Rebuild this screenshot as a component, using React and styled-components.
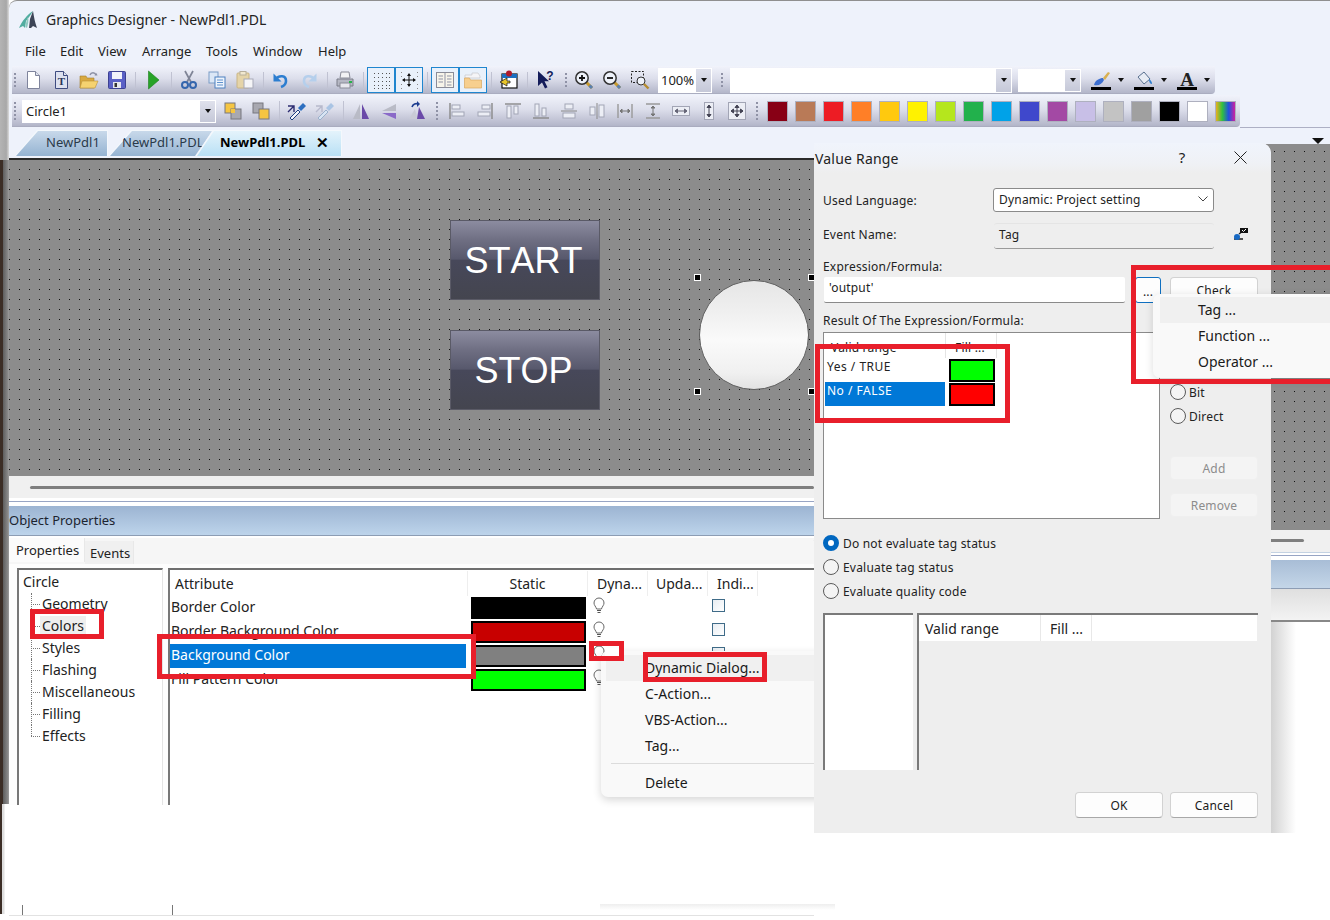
import React from "react";
import styled, { createGlobalStyle, css } from "styled-components";

const Global = createGlobalStyle`
  html, body { margin: 0; padding: 0; background: #fff; }
  * { box-sizing: border-box; }
  body { font-family: "Noto Sans", "Open Sans", sans-serif; color: #111; }
`;

const Root = styled.div`
  position: relative; width: 1330px; height: 920px; overflow: hidden;
  display: flex; background: #fff;
`;
const Edge = styled.div`display: flex; flex-direction: column; width: 9px; flex: none;`;
const EdgeTop = styled.div`height: 160px; background: linear-gradient(90deg, #b4b4b4, #a8a8a8 70%, #dcdcdc);`;
const EdgeMid = styled.div`height: 644px; background: linear-gradient(90deg, #3b2d25 0 3px, #5d5d5d 3px, #8a8a8a 8px, #a0a0a0);`;
const EdgeLow = styled.div`height: 110px; background: linear-gradient(90deg, #3b2d25 0 2px, #dedede 2px 4px, #fff 5px);`;
const Work = styled.div`flex: 1; min-width: 0; display: flex; flex-direction: column;`;

const Chrome = styled.div`height: 127px; background: #eef2fb; border-top: 1px solid #8f8f8f; border-top-left-radius: 8px; padding-left: 3px;`;
const TitleBar = styled.div`height: 37px; display: flex; align-items: center; gap: 8px; padding-left: 7px; font-size: 14px; color: #222;`;
const MenuBar = styled.div`height: 26px; display: flex; align-items: center; padding-left: 13px; font-size: 13px; color: #222;`;
const MenuItem = styled.span`width: ${p => p.$w}px;`;
const ToolRow = styled.div`
  display: flex; align-items: center; width: ${p => p.$w}px; height: ${p => p.$h}px;
  margin-top: ${p => p.$mt}px; background: linear-gradient(180deg, #f1f3fb 0%, #dcdeeb 45%, #b4b7ca 95%, #a5a7ba 100%);
  border-bottom-right-radius: 4px;
`;
const Grip = styled.div`
  width: ${p => p.$w}px; align-self: stretch; flex: none; position: relative;
  &::before { content: ""; position: absolute; left: ${p => p.$l}px; top: 7px; bottom: 7px; border-left: 2px dotted #8f92a6; }
`;
const Spacer = styled.div`width: ${p => p.$w}px; flex: none;`;
const Tool = styled.div`
  width: 28px; height: 26px; flex: none; display: flex; align-items: center; justify-content: center;
  ${p => p.$on && css`background: #e9f1fb; outline: 1.5px solid #1f86cf; outline-offset: -1px;`}
`;
const Sep = styled.div`width: 8px; flex: none; display: flex; justify-content: center; align-self: stretch; padding: 6px 0; &::before { content: ""; width: 1px; background: #c0c2d2; }`;
const Combo = styled.div`
  width: ${p => p.$w}px; height: ${p => p.$h}px; margin-left: ${p => p.$ml || 0}px; flex: none; background: #fff;
  display: flex; align-items: center; justify-content: space-between; padding-left: ${p => p.$pl || 2}px;
  font-size: 13px; color: #222; border: 1px solid #fff;
`;
const ComboBtn = styled.div`
  width: 15px; align-self: stretch; background: linear-gradient(180deg, #dfe1ec, #c5c8d8); display: flex; align-items: center; justify-content: center;
  &::before { content: ""; border: 3.5px solid transparent; border-top: 4px solid #111; border-bottom: 0; }
`;
const ColorTool = styled.div`width: 43px; flex: none; display: flex; align-items: center; margin-left: ${p => p.$ml || 0}px;`;
const ColorIcon = styled.div`width: 26px; display: flex; justify-content: center;`;
const Caret = styled.div`width: 14px; display: flex; justify-content: center; &::before { content: ""; border: 3.5px solid transparent; border-top: 4px solid #111; border-bottom: 0; }`;
const Swatch = styled.div`
  width: 28px; flex: none; display: flex; justify-content: center;
  &::before { content: ""; width: 19px; height: 19px; background: ${p => p.$c}; border: 1.5px solid #e9e6de; outline: 1px solid #aeb0bf; outline-offset: -1px; }
`;

const Body = styled.div`flex: 1; display: flex; min-height: 0;`;
const LeftCol = styled.div`width: 805px; flex: none; display: flex; flex-direction: column;`;
const RightCol = styled.div`flex: 1; display: flex; flex-direction: column; min-width: 0;`;

const TabStrip = styled.div`height: 31px; background: #eef2fb; display: flex; align-items: flex-end; padding: 0 0 2px 6px;`;
const Tab = styled.div`
  position: relative; height: 26px; flex: none; width: ${p => p.$w}px; margin-left: ${p => p.$ml || 0}px; z-index: ${p => p.$active ? 2 : 1};
  font-size: 13px; display: flex; align-items: center; padding: 0 0 2px ${p => p.$pl}px; color: ${p => p.$active ? "#000" : "#2a3a4a"};
  font-weight: ${p => p.$active ? 700 : 400}; background: #f4f8fc;
  clip-path: ${p => p.$clip};
  &::before { content: ""; position: absolute; inset: 1px 1px 0 1px; clip-path: ${p => p.$clip};
    background: ${p => p.$active ? "linear-gradient(180deg, #e4f3fb, #b9e0f5)" : "linear-gradient(180deg, #c8d9ea, #95b3d2)"}; }
  & > * { position: relative; white-space: nowrap; }
`;
const TabClose = styled.span`margin-left: 11px; font-weight: 700; font-size: 15px; line-height: 1;`;

const dots = css`background-color: #8c8c8c; background-image: radial-gradient(circle at 5.5px 5.5px, #111 .45px, transparent .75px); background-size: 10px 10px;`;
const Canvas = styled.div`
  position: relative; height: 318px; border-top: 2px solid #2a2a2a; ${dots}; background-position: 5px 4px;
`;
const HmiButton = styled.div`
  position: absolute; left: ${p => p.$x}px; top: ${p => p.$y}px; width: 150px; height: 80px; border: 1px solid #5a5a66;
  background: linear-gradient(180deg, #8c8ca0 0%, #6e6e82 25%, #57586c 49%, #47485a 50%, #44454f 100%);
  color: #fff; font: 36px "Liberation Sans", Arial, sans-serif; font-kerning: none; display: flex; align-items: center; justify-content: center; padding: 2px 3px 0 0;
`;
const Lamp = styled.div`
  position: absolute; left: 690px; top: 120px; width: 110px; height: 110px; border-radius: 50%; border: 1px solid #5f5f5f;
  background: linear-gradient(180deg, #e6e6e6 0%, #f0f0f0 30%, #fafafa 55%, #f0f0f0 85%, #e2e2e2 100%);
`;
const Handle = styled.i`position: absolute; left: ${p => p.$x}px; top: ${p => p.$y}px; width: 5px; height: 5px; background: #000; outline: 1px solid #fff;`;

const ScrollArea = styled.div`height: 22px; background: #f0f0f0; padding: 10px 0 0 21px; flex: none;`;
const Thumb = styled.div`height: 3px; background: #7f7f7f; width: ${p => p.$w}px; border-radius: 2px;`;
const SplitLines = styled.div`height: 8px; flex: none; background: linear-gradient(180deg, #fff 0 3px, #98a5c4 3px 4px, #fff 4px);`;
const PanelTitle = styled.div`height: 30px; flex: none; background: linear-gradient(180deg, #9cb4d2, #bdd4eb); border-bottom: 1px solid #8d9db4; font-size: 13px; color: #1c2430; display: flex; align-items: center; padding-bottom: 2px;`;
const TabsRow = styled.div`height: 26px; flex: none; margin-top: 2px; background: #f6f6f6; display: flex; align-items: flex-end; font-size: 13px;`;
const PropTab = styled.div`
  height: ${p => p.$on ? 24 : 23}px; width: ${p => p.$w}px; display: flex; align-items: center; padding-left: ${p => p.$on ? 7 : 5}px; color: #222;
  background: ${p => p.$on ? "#fbfbfb" : "#f0f0f0"}; border-right: 1px solid #e8e8e8; align-self: ${p => p.$on ? "flex-start" : "flex-end"};
`;
const Panels = styled.div`height: 241px; flex: none; background: #fdfdfd; display: flex; gap: 5px; padding: 4px 0 0 8px;`;
const TreeBox = styled.div`width: 146px; background: #fff; border-top: 2px solid #6f6f6f; border-left: 2px solid #777; border-right: 1px solid #e4e4e4; font-size: 14px; color: #222; padding: 1px 0 0 4px;`;
const TreeRoot = styled.div`height: 22px; line-height: 22px;`;
const TreeList = styled.div`margin-left: 8px;`;
const TreeNode = styled.div`
  position: relative; height: 22px; line-height: 22px; padding-left: 11px;
  &::before { content: ""; position: absolute; left: 0; top: 0; height: ${p => p.$last ? "50%" : "100%"}; border-left: 1px dotted #777; }
  &::after { content: ""; position: absolute; left: 0; top: 50%; width: 9px; border-top: 1px dotted #777; }
`;
const TreeLabel = styled.span`display: inline-block; height: 20px; line-height: 20px; padding: 0 ${p => p.$on ? 2 : 0}px; margin-left: ${p => p.$on ? -2 : 0}px; background: ${p => p.$on ? "#eee" : "transparent"};`;
const AttrBox = styled.div`flex: 1; min-width: 0; background: #fff; border-top: 2px solid #6f6f6f; border-left: 2px solid #777; font-size: 14px; color: #222;`;
const colTpl = "298px 120px 60px 60px 50px 1fr";
const AttrHead = styled.div`display: grid; grid-template-columns: ${colTpl}; height: 26px; align-items: center;`;
const HeadCell = styled.div`
  height: 25px; line-height: 26px; border-right: ${p => p.$last ? "none" : "1px solid #eee"};
  padding-left: ${p => p.$pl || 0}px; text-align: ${p => p.$center ? "center" : "left"}; white-space: nowrap; overflow: hidden;
`;
const AttrRow = styled.div`display: grid; grid-template-columns: ${colTpl}; height: 24px; align-items: center;`;
const AttrName = styled.div`
  height: 24px; line-height: 21px; padding-left: 1px; white-space: nowrap; width: 296px;
  ${p => p.$sel && css`background: #0078d7; color: #fff;`}
`;
const StaticCell = styled.div`
  width: 115px; height: 22px; margin-left: 3px; background: ${p => p.$c}; border: 2px solid #000;
`;
const BulbCell = styled.div`padding-left: 5px; height: 24px; margin-top: -5px; display: flex; align-items: center;`;
const Check = styled.div`width: 13px; height: 13px; margin-left: 4px; margin-top: -6px; border: 1px solid #3f6b88; background: linear-gradient(135deg, #e8edf2, #fff);`;
const Bottom = styled.div`flex: 1; position: relative; background: #fff;`;
const Ticks = styled.div`
  height: 11px; margin-top: 100px; border-bottom: 1px solid #e2e2e2; display: flex; padding-left: 13px; gap: 149px;
`;
const Tick = styled.div`width: 1px; height: 10px; background: #777;`;

const RightTail = styled.div`height: 17px; flex: none; background: linear-gradient(90deg, #eef2fb 0 426px, #adb0c4 426px) top / 100% 1px no-repeat, #eef2fb; display: flex; justify-content: flex-end; padding: 11px 6px 0 0;
  &::before { content: ""; height: 0; border: 6px solid transparent; border-top: 6px solid #111; border-bottom: 0; }`;
const RightCanvas = styled.div`height: 386px; flex: none; ${dots}; background-position: 5px 2px;`;
const RightScroll = styled.div`height: 22px; flex: none; background: #f0f0f0; padding-top: 9px;`;
const RightLines = styled.div`height: 8px; flex: none; background: linear-gradient(180deg, #c4d2e2 0 1px, #fff 1px 3px, #98a5c4 3px 4px, #fff 4px);`;
const RightBlue = styled.div`height: 29px; flex: none; background: linear-gradient(180deg, #a8bdd6, #c4d6e8); border-bottom: 1px solid #8d9db4;`;
const RightGrey = styled.div`height: 33px; flex: none; background: linear-gradient(180deg, #dfdfdf, #f3f3f3); border-bottom: 2px solid #888;`;
const RightRest = styled.div`flex: none; height: 211px; background: linear-gradient(90deg, #eee 0, #eee 457px, #d2d2d2 457px, #fff 482px);`;

/* dialog */
const Dialog = styled.div`
  position: absolute; left: 814px; top: 143px; width: 457px; height: 690px; background: #eeeeee;
  border-radius: 0 10px 8px 3px; font-size: 12px; letter-spacing: .2px; color: #222; display: flex; flex-direction: column; overflow: hidden;
`;
const DlgTitle = styled.div`height: 30px; flex: none; display: flex; align-items: center; padding-left: 1px; font-size: 14px; color: #222; background: linear-gradient(180deg, #f0f4fc, #eff1f5 70%, #eee);`;
const DlgTitleText = styled.div`flex: 1;`;
const DlgGlyph = styled.div`width: ${p => p.$w}px; display: flex; justify-content: center; font-size: 15px; padding-bottom: 2px;`;
const DlgBody = styled.div`flex: 1; display: flex; flex-direction: column; padding: 0 13px 0 9px;`;
const FormRow = styled.div`display: flex; align-items: center; height: ${p => p.$h}px; margin-top: ${p => p.$mt}px; flex: none;`;
const FieldLabel = styled.div`width: ${p => p.$w || 170}px; flex: none; white-space: nowrap; padding-bottom: ${p => p.$pb || 0}px;`;
const Select = styled.div`width: 221px; height: 24px; background: #fff; border: 1px solid #8a8a8a; border-radius: 3px; display: flex; align-items: center; justify-content: space-between; padding: 0 4px 2px 5px;`;
const ReadOnly = styled.div`width: 220px; height: 26px; margin-left: 1px; padding: 0 0 3px 5px; display: flex; align-items: center; border-top: 1px solid #e4e4e4; border-bottom: 1px solid #9a9a9a; border-radius: 3px; background: #eeeeee;`;
const TinyIcon = styled.div`margin-left: 19px; display: flex; margin-top: -5px;`;
const TextInput = styled.div`width: 302px; height: 26px; margin-left: 1px; background: #fff; border-bottom: 1px solid #8a8a8a; border-radius: 2px; padding: 0 5px 5px; display: flex; align-items: center;`;
const DotsBtn = styled.div`width: 26px; height: 26px; margin-left: 10px; border: 1px solid #0f6fc0; border-radius: 3px; background: #fdfdfd; display: flex; align-items: flex-end; justify-content: center; line-height: 1.4; padding-bottom: 1px;`;
const DlgBtn = styled.div`
  width: 88px; height: ${p => p.$h || 26}px; background: ${p => p.$off ? "#f4f4f4" : "#fdfdfd"}; color: ${p => p.$off ? "#8c8c8c" : "#1a1a1a"};
  border: 1px solid ${p => p.$off ? "#efefef" : "#d2d2d2"}; ${p => !p.$off && "border-bottom-color: #a8a8a8;"} border-radius: 4px; display: flex; align-items: center; justify-content: center;
`;
const CheckSlot = styled.div`margin-left: 9px;`;
const Middle = styled.div`display: flex; height: 187px; flex: none;`;
const RangeList = styled.div`width: 337px; background: #fff; border: 1px solid #8a8a8a; flex: none;`;
const RangeHead = styled.div`display: flex; height: 25px;`;
const RangeHeadCell = styled.div`width: ${p => p.$w}px; border-right: 1px solid #e4e4e4; padding-left: ${p => p.$pl}px; line-height: 30px; white-space: nowrap; overflow: hidden;`;
const RangeRow = styled.div`display: flex; height: 24px; align-items: flex-start;`;
const RangeName = styled.div`
  width: 120px; height: 24px; margin-left: 1px; padding-left: ${p => p.$sel ? 2 : 2}px; line-height: 18px; letter-spacing: .5px;
  ${p => p.$sel && css`background: #0078d7; color: #fff;`}
`;
const RangeFill = styled.div`width: 46px; height: 23px; margin-left: 4px; margin-top: 1px; background: ${p => p.$c}; border: 2px solid #000;`;
const SideCol = styled.div`flex: 1; display: flex; flex-direction: column; padding-left: 10px;`;
const SideRadios = styled.div`margin-top: 48px; display: flex; flex-direction: column;`;
const RadioLine = styled.div`display: flex; align-items: center; height: 24px; gap: ${p => p.$gap}px;`;
const Radio = styled.div`
  width: 16px; height: 16px; border-radius: 50%; flex: none; border: 1px solid #5a5a5a; background: #f4f4f4;
  ${p => p.$on && css`border: 5px solid #0067c0; background: #fff;`}
`;
const SideBtns = styled.div`margin-top: 28px; display: flex; flex-direction: column; gap: 13px;`;
const RadioGroup = styled.div`margin-top: 12px; flex: none;`;
const LowerLists = styled.div`margin-top: 10px; height: 157px; flex: none; display: flex; gap: 4px;`;
const LowerLeft = styled.div`width: 90px; background: #fff; border-top: 2px solid #7a7a7a; border-left: 2px solid #7a7a7a;`;
const LowerRight = styled.div`flex: 1; background: #eee; border-top: 2px solid #7a7a7a; border-left: 2px solid #7a7a7a; font-size: 14px; letter-spacing: 0;`;
const LowerHead = styled.div`height: 26px; background: #fff; display: flex; margin-right: 1px;`;
const LowerCell = styled.div`width: ${p => p.$w}px; padding-left: ${p => p.$pl}px; border-right: 1px solid #e8e8e8; line-height: 27px; white-space: nowrap;`;
const Footer = styled.div`margin-top: 22px; display: flex; justify-content: flex-end; gap: 7px;`;

/* popups */
const ContextMenu = styled.div`
  position: absolute; left: 601px; top: 651px; width: 240px; height: 146px; background: #f9f9f9; border-radius: 7px 0 0 7px;
  box-shadow: 0 3px 8px rgba(0,0,0,.16); font-size: 14px; color: #1a1a1a; padding-top: 4px;
`;
const CtxItem = styled.div`height: 26px; line-height: 25px; padding-left: 39px; margin-left: 5px; ${p => p.$hover && "background: #f0f0f0;"}`;
const CtxSep = styled.div`height: 1px; background: #dcdcdc; margin: 4px 0 6px 10px;`;
const Popup = styled.div`
  position: absolute; left: 1153px; top: 294px; width: 200px; height: 84px; background: #f9f9f9; border-radius: 7px 0 0 7px;
  box-shadow: 0 2px 8px rgba(0,0,0,.14); font-size: 14px; color: #1a1a1a; padding-top: 3px;
`;
const PopItem = styled.div`height: 26px; line-height: 25px; margin-left: 7px; padding-left: 38px; ${p => p.$hover && "background: #f0f0f0;"}`;
const ShadowStripe = styled.div`position: absolute; left: 600px; top: 904px; width: 235px; height: 6px; background: linear-gradient(180deg, #eeeeee, #fff);`;
const RedBox = styled.div`
  position: absolute; left: ${p => p.$x}px; top: ${p => p.$y}px; width: ${p => p.$w}px; height: ${p => p.$h}px;
  border: 5px solid #e81f2b; ${p => p.$open && "border-right: none;"} pointer-events: none;
  ${p => p.$cover && css`&::after { content: ""; position: absolute; left: 11px; top: 2px; width: 14px; height: 8px; background: #fff; }`}
`;

/* icons */
const Ic = ({ children, s = 20, v = "0 0 20 20" }) => <svg width={s} height={s} viewBox={v}>{children}</svg>;
const Logo = () => (
  <svg width="19" height="18" viewBox="0 0 19 18">
    <path d="M0 17 C3 10 8 4 14 0 C12 4 9 7 7 10 L6 17 L4 15 Z" fill="#52ada0" />
    <path d="M14 0 C15 6 16 12 18 17 L14 15 L12 17 L10 17 L11 8 Z" fill="#3c4456" />
    <path d="M9 6 C10 9 9 13 8 17 L6.500 16 C7 12 7.500 9 9 6z" fill="#8fc9c0" />
  </svg>
);
const doc = (stroke, fill) => <><path d="M4.5 1.5h8l4 4v13h-12z" fill={fill} stroke={stroke} /><path d="M12.5 1.5v4h4" fill="#dfe3ee" stroke={stroke} /></>;
const New = () => <Ic>{doc("#7f849c", "#fff")}</Ic>;
const TDoc = () => <Ic>{doc("#3f4c80", "#dde1ef")}<text x="10.5" y="15" fontSize="11" fontWeight="700" fontFamily="Liberation Serif" textAnchor="middle" fill="#2a3358">T</text></Ic>;
const Open = () => <Ic><path d="M1 6h6l1 2h7v10H1z" fill="#d9a93f" stroke="#a5812e" strokeWidth=".6" /><path d="M3 11h16l-3 7H1z" fill="#f5d270" stroke="#b8913a" strokeWidth=".6" /><path d="M11 5c1-3 5-3 6 0" fill="none" stroke="#8b8fa3" strokeWidth="1.4" /><path d="M15.5 5.5h3l-1-2.5z" fill="#8b8fa3" /></Ic>;
const Save = () => <Ic><rect x="1.5" y="1.5" width="17" height="17" rx="1" fill="#5a60c6" stroke="#3d4192" /><rect x="5" y="2" width="10" height="7" fill="#f1f2fb" /><rect x="6" y="12" width="8" height="6" fill="#e6e6ee" /><rect x="7.5" y="13" width="2.5" height="4" fill="#333" /></Ic>;
const Play = () => <Ic><path d="M5.5 1 L16 10 L5.5 19z" fill="#27a327" stroke="#1d7d1d" strokeWidth=".6" /></Ic>;
const Cut = () => <Ic><path d="M6 1l6 11M14 1L8 12" stroke="#7f8496" strokeWidth="1.7" /><circle cx="6" cy="15" r="3" fill="none" stroke="#3566ad" strokeWidth="2" /><circle cx="14" cy="15" r="3" fill="none" stroke="#3566ad" strokeWidth="2" /></Ic>;
const pageLines = <path d="M10 10h6M10 12.5h6M10 15h6" stroke="#3a78c0" strokeWidth=".8" />;
const Copy = () => <Ic><rect x="2" y="2" width="9" height="11" fill="#dbe7f6" stroke="#7a9cc6" /><rect x="8" y="7" width="10" height="11" fill="#eef4fc" stroke="#4c80c0" />{pageLines}</Ic>;
const Paste = () => <Ic><rect x="2" y="3" width="12" height="15" rx="1" fill="#e5d4a8" stroke="#c9b484" /><rect x="5" y="1.5" width="6" height="3.5" fill="#f1e8cf" stroke="#b8b09c" /><rect x="9" y="9" width="9" height="9" fill="#f5f5f7" stroke="#a7a9b8" /></Ic>;
const Undo = ({ c = "#2d7ed0", flip }) => <Ic><g transform={flip ? "translate(20 0) scale(-1 1)" : undefined}><path d="M5 9c3-4 10-4 10 2 0 3-2 5-5 6" fill="none" stroke={c} strokeWidth="2.6" /><path d="M2.5 3.5v8h8z" fill={c} /></g></Ic>;
const Print = () => <Ic><path d="M6 2h8l1 6H5z" fill="#f2f2f4" stroke="#8a8c98" /><path d="M2 9h16v7H2z" fill="#b6b8c4" stroke="#7a7c88" /><rect x="5" y="13" width="10" height="5" fill="#e8e8ee" stroke="#8a8c98" /><rect x="14" y="11" width="3" height="2" fill="#27b14a" /></Ic>;
const Grid = () => <Ic>{[3, 7, 11, 15, 18].flatMap(x => [3, 7, 11, 15, 18].map(y => <rect key={x + "-" + y} x={x} y={y} width="1" height="1" fill="#555" />))}</Ic>;
const Snap = () => <Ic>{[2, 18].flatMap(x => [2, 6, 14, 18].map(y => <rect key={x + "-" + y} x={x} y={y} width="1" height="1" fill="#8a8a8a" />))}<path d="M10 4v12M4 10h12" stroke="#111" strokeWidth="1" /><path d="M10 3l-2 3h4zM10 17l-2-3h4zM3 10l3-2v4zM17 10l-3-2v4z" fill="#111" /></Ic>;
const Book = () => <Ic><rect x="1.5" y="2.5" width="17" height="15" fill="#f8f5ea" stroke="#8a8c98" /><path d="M10 3v14M3.5 6h4.5M3.5 9h4.5M3.5 12h4.5M12 6h4.5M12 9h4.5M12 12h4.5M12 15h4.5" stroke="#8f93a6" /></Ic>;
const PaleFolder = () => <Ic><path d="M2 5h7v-2h6l2 3v2H2z" fill="#f5f5f7" stroke="#c7c7cc" strokeWidth=".7" /><path d="M1.5 8h5l1 2h11v8h-17z" fill="#f7cf8e" stroke="#d8a860" strokeWidth=".7" /></Ic>;
const WinObj = () => <Ic><rect x="3" y="4" width="15" height="14" fill="#fff" stroke="#111" strokeWidth="1.2" /><rect x="3" y="4" width="15" height="4" fill="#1c6fc0" /><circle cx="10" cy="3.5" r="3" fill="#b01a2a" /><path d="M1 12l7-4v3h3v2H8v3z" fill="#e8c52a" stroke="#111" strokeWidth=".7" /></Ic>;
const HelpCur = () => <Ic><path d="M3 1v15l4-3.5 3 6 2.5-1.2-3-6H14z" fill="#141c5a" /><text x="15" y="10" fontSize="12" fontWeight="700" fontFamily="Liberation Sans" textAnchor="middle" fill="#141c5a">?</text></Ic>;
const lens = <><path d="M12 12l6 6" stroke="#c79a2e" strokeWidth="3" /><path d="M15.5 15.5l2.5 2.5" stroke="#5a80b0" strokeWidth="3" /><circle cx="8" cy="8" r="6.2" fill="#eef2fa" stroke="#333" strokeWidth="1.5" /></>;
const ZoomIn = () => <Ic>{lens}<path d="M5 8h6M8 5v6" stroke="#111" strokeWidth="1.8" /></Ic>;
const ZoomOut = () => <Ic>{lens}<path d="M5 8h6" stroke="#111" strokeWidth="1.8" /></Ic>;
const ZoomRect = () => <Ic><rect x="1.5" y="1.5" width="12" height="11" fill="none" stroke="#222" strokeDasharray="2 1.5" /><circle cx="11" cy="11" r="4" fill="#eef2fa" stroke="#333" /><path d="M14 14l4.5 4.5" stroke="#b58c30" strokeWidth="2.4" /></Ic>;
const Brush = () => <Ic><path d="M3 15c1-5 6-7 9-7l1 2c-2 4-5 6-10 5z" fill="#3d6fd0" /><path d="M12 8l5-6 2 1-5 7z" fill="#d9b050" /><rect x="0" y="17" width="20" height="3" fill="#000" /></Ic>;
const Fill = () => <Ic><path d="M4 7l6-5 6 7-6 5z" fill="#e8ecf4" stroke="#58708f" /><path d="M15 9c2 1 3 3 3 5-2 0-3-2-3-5z" fill="#2d7ed0" /><rect x="0" y="17" width="20" height="3" fill="#000" /></Ic>;
const FontA = () => <Ic><text x="10" y="15.5" fontSize="19" fontWeight="700" fontFamily="Liberation Serif" textAnchor="middle" fill="#222">A</text><rect x="0" y="17" width="20" height="3" fill="#000" /></Ic>;
const Layer = ({ front }) => <Ic><rect x="2" y="2" width="10" height="10" fill={front ? "#a8a8b0" : "#f5c542"} stroke="#77777f" /><rect x="8" y="8" width="10" height="10" fill={front ? "#f5c542" : "#a8a8b0"} stroke="#77777f" />{front ? null : <rect x="8" y="8" width="4" height="4" fill="#f5c542" />}</Ic>;
const Dropper = ({ pale }) => <Ic><path d="M3 17l8-8 2 2-8 8z" fill={pale ? "#d8e4f2" : "#f4f4f8"} stroke={pale ? "#9ab0cc" : "#1d3d80"} /><path d="M11 7l5-5 3 3-5 5z" fill={pale ? "#a9c4e4" : "#2d6fc0"} /><path d="M1 11l6-6M1 5h6v6" fill="none" stroke={pale ? "#b7b9cc" : "#2b2b70"} strokeWidth="1.4" /></Ic>;
const FlipH = () => <Ic><path d="M9 3v15H2z" fill="#b9bbc6" /><path d="M11 3v15h7z" fill="#6a4aa8" /></Ic>;
const FlipV = () => <Ic><path d="M17 3v7H3z" fill="#b9bbc6" /><path d="M17 18v-6H3z" fill="#8a6ac8" /></Ic>;
const Rotate = () => <Ic><path d="M12 6l6 12h-8z" fill="#6a4aa8" /><path d="M8 8l2 10H2z" fill="#c9cbd6" /><path d="M5 6c1-3 4-4 6-3" fill="none" stroke="#1d3d90" strokeWidth="1.6" /><path d="M10 0l3 3-3 3z" fill="#1d3d90" /></Ic>;
const al = { stroke: "#a2a5b5", fill: "#eceef5", strokeWidth: 1 };
const Align = ({ k }) => {
  const s = {
    l: <><path d="M3 2v16" stroke="#888" strokeWidth="1.4" /><rect x="5" y="4" width="8" height="4" {...al} /><rect x="5" y="11" width="12" height="4" {...al} /></>,
    r: <><path d="M17 2v16" stroke="#888" strokeWidth="1.4" /><rect x="7" y="4" width="8" height="4" {...al} /><rect x="3" y="11" width="12" height="4" {...al} /></>,
    t: <><path d="M2 3h16" stroke="#888" strokeWidth="1.4" /><rect x="4" y="5" width="4" height="12" {...al} /><rect x="11" y="5" width="4" height="8" {...al} /></>,
    b: <><path d="M2 17h16" stroke="#888" strokeWidth="1.4" /><rect x="4" y="3" width="4" height="12" {...al} /><rect x="11" y="7" width="4" height="8" {...al} /></>,
    cv: <><path d="M2 10h16" stroke="#888" /><rect x="6" y="3" width="8" height="5" {...al} /><rect x="4" y="12" width="12" height="5" {...al} /></>,
    ch: <><path d="M10 2v16" stroke="#888" /><rect x="3" y="6" width="5" height="8" {...al} /><rect x="12" y="4" width="5" height="12" {...al} /></>,
    dh: <><path d="M3 3v14M17 3v14" stroke="#999" strokeWidth="1.4" /><path d="M5 10h10M5 10l2-2v4zM15 10l-2-2v4z" stroke="#777" fill="#777" /></>,
    dv: <><path d="M3 3h14M3 17h14" stroke="#999" strokeWidth="1.4" /><path d="M10 5v10M10 5l-2 2h4zM10 15l-2-2h4z" stroke="#777" fill="#777" /></>,
    sh: <><rect x="1.5" y="5.5" width="17" height="9" {...al} /><path d="M4 10h12M4 10l2.5-2v4zM16 10l-2.5-2v4z" stroke="#667" fill="#667" /></>,
    sv: <><rect x="5.5" y="1.5" width="9" height="17" {...al} /><path d="M10 4v12M10 4l-2 2.5h4zM10 16l-2-2.5h4z" stroke="#445" fill="#445" /></>,
    sb: <><rect x="1.5" y="1.5" width="17" height="17" {...al} /><path d="M4 10h12M10 4v12M4 10l2.5-2v4zM16 10l-2.5-2v4zM10 4l-2 2.5h4zM10 16l-2-2.5h4z" stroke="#445" fill="#445" /></>,
  };
  return <Ic>{s[k]}</Ic>;
};
const Bulb = () => <svg width="12" height="17" viewBox="0 0 12 17"><path d="M6 1a5 5 0 0 0-5 5c0 2.2 1.8 3.4 2.6 6h4.8c.8-2.6 2.6-3.8 2.6-6a5 5 0 0 0-5-5z" fill="#fff" stroke="#666" /><path d="M4 13.5h4M4.5 15.5h3" stroke="#555" /></svg>;
const Chevron = () => <svg width="12" height="8" viewBox="0 0 12 8"><path d="M1.5 1.5L6 6l4.5-4.5" fill="none" stroke="#444" /></svg>;
const CloseX = () => <svg width="13" height="13" viewBox="0 0 13 13"><path d="M.5.5l12 12M12.5.5l-12 12" stroke="#222" /></svg>;
const NetIcon = () => <svg width="15" height="14" viewBox="0 0 15 14"><path d="M6 7L13 1.5M1 12h9" stroke="#222" strokeWidth="1.5" /><rect x="7" y="1" width="8" height="5" fill="#111" /><path d="M9 3l1.5 1.5L13 2" stroke="#fff" fill="none" /><circle cx="4" cy="10" r="3" fill="#1769c4" /></svg>;

const swatches = ["#880015", "#b97a57", "#ed1c24", "#ff7f27", "#ffc90e", "#fff200", "#b5e61d", "#22b14c", "#00a2e8", "#3f48cc", "#a349a4", "#c8bfe7", "#c3c3c3", "#a0a0a0", "#000", "#fff", "linear-gradient(90deg, #e8b020, #30c040, #2050e0, #d020a0)"];
const tree = ["Geometry", "Colors", "Styles", "Flashing", "Miscellaneous", "Filling", "Effects"];
const attrs = [["Border Color", "#000"], ["Border Background Color", "#c80000"], ["Background Color", "#808080"], ["Fill Pattern Color", "#00ff00"]];
const menus = [["File", 35], ["Edit", 38], ["View", 44], ["Arrange", 64], ["Tools", 47], ["Window", 65], ["Help", 40]];
const clipL = "polygon(22px 0, 100% 0, 100% 100%, 0 100%)";
const clipB = "polygon(22px 0, 100% 0, 86px 100%, 0 100%)";
const clipA = "polygon(17px 0, 100% 0, 100% 100%, 0 100%)";

export default function App() {
  return (
    <Root>
      <Global />
      <Edge><EdgeTop /><EdgeMid /><EdgeLow /></Edge>
      <Work>
        <Chrome>
          <TitleBar><Logo /><span>Graphics Designer - NewPdl1.PDL</span></TitleBar>
          <MenuBar>{menus.map(([m, w]) => <MenuItem key={m} $w={w}>{m}</MenuItem>)}</MenuBar>
          <ToolRow $w={1203} $h={28} $mt={2}>
            <Grip $w={7} $l={2} />
            <Tool><New /></Tool><Tool><TDoc /></Tool><Tool><Open /></Tool><Tool><Save /></Tool><Sep />
            <Tool><Play /></Tool><Sep />
            <Tool><Cut /></Tool><Tool><Copy /></Tool><Tool><Paste /></Tool><Sep />
            <Tool><Undo /></Tool><Tool><Undo c="#b5cfec" flip /></Tool><Sep />
            <Tool><Print /></Tool><Sep />
            <Tool $on><Grid /></Tool><Tool $on><Snap /></Tool><Sep />
            <Tool $on><Book /></Tool><Tool $on><PaleFolder /></Tool><Sep />
            <Tool><WinObj /></Tool><Sep />
            <Tool><HelpCur /></Tool><Grip $w={11} $l={6} />
            <Tool><ZoomIn /></Tool><Tool><ZoomOut /></Tool><Tool><ZoomRect /></Tool>
            <Combo $w={54} $h={25} $ml={4}>100%<ComboBtn /></Combo>
            <Grip $w={18} $l={9} />
            <Combo $w={282} $h={25}><span /><ComboBtn /></Combo>
            <Combo $w={63} $h={23} $ml={6}><span /><ComboBtn /></Combo>
            <ColorTool $ml={7}><ColorIcon><Brush /></ColorIcon><Caret /></ColorTool>
            <ColorTool><ColorIcon><Fill /></ColorIcon><Caret /></ColorTool>
            <ColorTool><ColorIcon><FontA /></ColorIcon><Caret /></ColorTool>
          </ToolRow>
          <ToolRow $w={1228} $h={32} $mt={1}>
            <Grip $w={10} $l={2} />
            <Combo $w={194} $h={23} $pl={3}>Circle1<ComboBtn /></Combo>
            <Spacer $w={3} />
            <Tool><Layer /></Tool><Tool><Layer front /></Tool><Sep />
            <Tool><Dropper /></Tool><Tool><Dropper pale /></Tool><Sep />
            <Tool><FlipH /></Tool><Tool><FlipV /></Tool><Tool><Rotate /></Tool>
            <Grip $w={12} $l={5} />
            {["l", "r", "t", "b", "cv", "ch", "dh", "dv", "sh", "sv", "sb"].map(k => <Tool key={k}><Align k={k} /></Tool>)}
            <Grip $w={12} $l={5} />
            {swatches.map(c => <Swatch key={c} $c={c} />)}
          </ToolRow>
        </Chrome>
        <Body>
          <LeftCol>
            <TabStrip>
              <Tab $w={93} $pl={31} $clip={clipL}><span>NewPdl1</span></Tab>
              <Tab $w={104} $ml={1} $pl={13} $clip={clipB}><span>NewPdl1.PDL</span></Tab>
              <Tab $w={146} $ml={-17} $pl={24} $active $clip={clipA}><span>NewPdl1.PDL</span><TabClose>✕</TabClose></Tab>
            </TabStrip>
            <Canvas>
              <HmiButton $x={441} $y={60}>START</HmiButton>
              <HmiButton $x={441} $y={170}>STOP</HmiButton>
              <Lamp />
              <Handle $x={686} $y={115} /><Handle $x={800} $y={115} />
              <Handle $x={686} $y={229} /><Handle $x={800} $y={229} />
            </Canvas>
            <ScrollArea><Thumb $w={784} /></ScrollArea>
            <SplitLines />
            <PanelTitle>Object Properties</PanelTitle>
            <TabsRow>
              <PropTab $on $w={76}>Properties</PropTab>
              <PropTab $w={49}>Events</PropTab>
            </TabsRow>
            <Panels>
              <TreeBox>
                <TreeRoot>Circle</TreeRoot>
                <TreeList>
                  {tree.map((t, i) => (
                    <TreeNode key={t} $last={i === tree.length - 1}><TreeLabel $on={t === "Colors"}>{t}</TreeLabel></TreeNode>
                  ))}
                </TreeList>
              </TreeBox>
              <AttrBox>
                <AttrHead>
                  <HeadCell $pl={5}>Attribute</HeadCell>
                  <HeadCell $center>Static</HeadCell>
                  <HeadCell $pl={9}>Dyna...</HeadCell>
                  <HeadCell $pl={8}>Upda...</HeadCell>
                  <HeadCell $pl={9}>Indi...</HeadCell>
                  <HeadCell $last />
                </AttrHead>
                {attrs.map(([n, c], i) => (
                  <AttrRow key={n}>
                    <AttrName $sel={i === 2}>{n}</AttrName>
                    <StaticCell $c={c} />
                    <BulbCell><Bulb /></BulbCell>
                    <div />
                    {i < 3 ? <Check /> : <div />}
                  </AttrRow>
                ))}
              </AttrBox>
            </Panels>
            <Bottom>
              <Ticks><Tick /><Tick /></Ticks>
            </Bottom>
          </LeftCol>
          <RightCol>
            <RightTail />
            <RightCanvas />
            <RightScroll><Thumb $w={490} /></RightScroll>
            <RightLines />
            <RightBlue />
            <RightGrey />
            <RightRest />
          </RightCol>
        </Body>
      </Work>

      <ContextMenu>
        <CtxItem $hover>Dynamic Dialog...</CtxItem>
        <CtxItem>C-Action...</CtxItem>
        <CtxItem>VBS-Action...</CtxItem>
        <CtxItem>Tag...</CtxItem>
        <CtxSep />
        <CtxItem>Delete</CtxItem>
      </ContextMenu>
      <ShadowStripe />

      <Dialog>
        <DlgTitle>
          <DlgTitleText>Value Range</DlgTitleText>
          <DlgGlyph $w={54}>?</DlgGlyph>
          <DlgGlyph $w={62}><CloseX /></DlgGlyph>
        </DlgTitle>
        <DlgBody>
          <FormRow $h={24} $mt={15}>
            <FieldLabel>Used Language:</FieldLabel>
            <Select>Dynamic: Project setting<Chevron /></Select>
          </FormRow>
          <FormRow $h={26} $mt={11}>
            <FieldLabel $pb={4}>Event Name:</FieldLabel>
            <ReadOnly>Tag</ReadOnly>
            <TinyIcon><NetIcon /></TinyIcon>
          </FormRow>
          <FormRow $h={19} $mt={9}><FieldLabel $pb={2}>Expression/Formula:</FieldLabel></FormRow>
          <FormRow $h={26} $mt={0}>
            <TextInput>'output'</TextInput>
            <DotsBtn>...</DotsBtn>
            <CheckSlot><DlgBtn>Check</DlgBtn></CheckSlot>
          </FormRow>
          <FormRow $h={21} $mt={8}><FieldLabel $pb={2}>Result Of The Expression/Formula:</FieldLabel></FormRow>
          <Middle>
            <RangeList>
              <RangeHead>
                <RangeHeadCell $w={122} $pl={7}>Valid range</RangeHeadCell>
                <RangeHeadCell $w={51} $pl={9}>Fill ...</RangeHeadCell>
              </RangeHead>
              <RangeRow><RangeName>Yes / TRUE</RangeName><RangeFill $c="#00ff00" /></RangeRow>
              <RangeRow><RangeName $sel>No / FALSE</RangeName><RangeFill $c="#ff0000" /></RangeRow>
            </RangeList>
            <SideCol>
              <SideRadios>
                <RadioLine $gap={3}><Radio />Bit</RadioLine>
                <RadioLine $gap={3}><Radio />Direct</RadioLine>
              </SideRadios>
              <SideBtns>
                <DlgBtn $off $h={24}>Add</DlgBtn>
                <DlgBtn $off $h={24}>Remove</DlgBtn>
              </SideBtns>
            </SideCol>
          </Middle>
          <RadioGroup>
            <RadioLine $gap={4}><Radio $on />Do not evaluate tag status</RadioLine>
            <RadioLine $gap={4}><Radio />Evaluate tag status</RadioLine>
            <RadioLine $gap={4}><Radio />Evaluate quality code</RadioLine>
          </RadioGroup>
          <LowerLists>
            <LowerLeft />
            <LowerRight>
              <LowerHead>
                <LowerCell $w={122} $pl={6}>Valid range</LowerCell>
                <LowerCell $w={51} $pl={9}>Fill ...</LowerCell>
              </LowerHead>
            </LowerRight>
          </LowerLists>
          <Footer><DlgBtn>OK</DlgBtn><DlgBtn>Cancel</DlgBtn></Footer>
        </DlgBody>
      </Dialog>

      <Popup>
        <PopItem $hover>Tag ...</PopItem>
        <PopItem>Function ...</PopItem>
        <PopItem>Operator ...</PopItem>
      </Popup>

      <RedBox $x={30} $y={609} $w={74} $h={30} />
      <RedBox $x={157} $y={634} $w={319} $h={45} />
      <RedBox $x={589} $y={641} $w={35} $h={20} $cover />
      <RedBox $x={643} $y={652} $w={124} $h={30} />
      <RedBox $x={815} $y={344} $w={195} $h={79} />
      <RedBox $x={1131} $y={265} $w={199} $h={119} $open />
    </Root>
  );
}
